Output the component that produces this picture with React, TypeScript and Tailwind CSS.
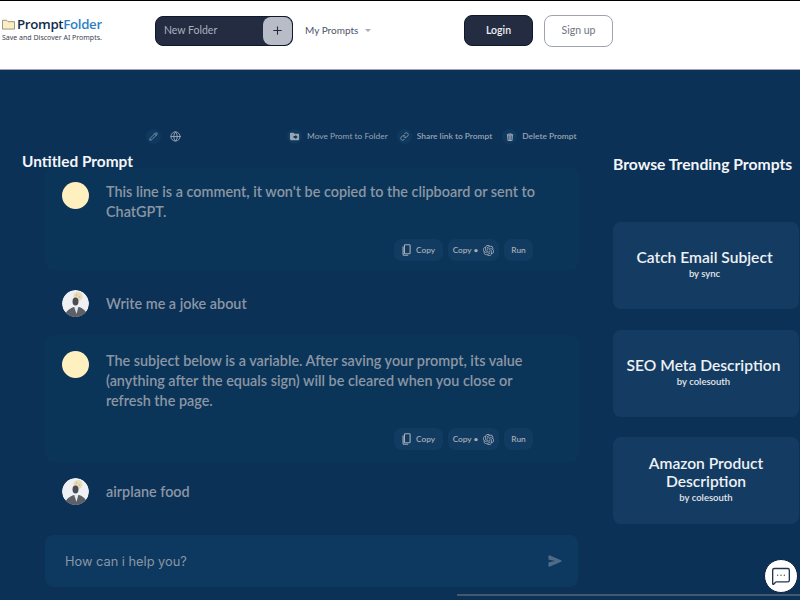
import { Pencil, Globe, Plus, MessageSquareMore } from "lucide-react";
import { MdDriveFileMove } from "react-icons/md";
import { BsTrash3Fill } from "react-icons/bs";
import { IoSend } from "react-icons/io5";
import { SiOpenai } from "react-icons/si";
import { FiLink } from "react-icons/fi";

const font = "font-['Lato','Noto_Sans',sans-serif]";

function Avatar() {
  return (
    <svg viewBox="0 0 27 27" className="w-[27px] h-[27px] shrink-0 rounded-full">
      <circle cx="13.5" cy="13.5" r="13.5" fill="#eef0f4" />
      <circle cx="16" cy="6.5" r="4.5" fill="#e6dcb8" />
      <circle cx="14.5" cy="5" r="0.8" fill="#c9b98a" />
      <circle cx="17.5" cy="7" r="0.8" fill="#c9b98a" />
      <ellipse cx="13.5" cy="11.5" rx="3" ry="4" fill="#4a4d54" />
      <path d="M3 27 C3 21 8 18.5 12 17 L17 17 C21 18.5 25 21 25 27 Z" fill="#5d6067" />
      <path d="M12 16.5 L14.5 24 L16.5 16.5 Z" fill="#e6e8ec" />
    </svg>
  );
}

function Yellow() {
  return <div className="w-[27px] h-[27px] shrink-0 rounded-full bg-[#fff0c0]" />;
}

function CopyIcon() {
  return (
    <svg viewBox="0 0 10 14" className="w-[9px] h-[12px]" fill="none" stroke="currentColor" strokeWidth="1.3">
      <rect x="2.6" y="0.8" width="6.6" height="10.6" rx="1" />
      <path d="M1 3 V12 Q1 13.2 2.2 13.2 H7" />
    </svg>
  );
}

function Tool({ w, children }: { w: string; children: React.ReactNode }) {
  return <span className={`${w} h-[22px] rounded-lg bg-[#123b61] flex items-center justify-center gap-[5px] text-[8.3px] font-semibold text-[#a5adb8]`}>{children}</span>;
}

function Actions() {
  return (
    <div className="flex justify-end gap-[5px] pr-[46px]">
      <Tool w="w-[49px]"><CopyIcon /><span>Copy</span></Tool>
      <Tool w="w-[51px]"><span>Copy •</span><SiOpenai size={11} /></Tool>
      <Tool w="w-[29px]">Run</Tool>
    </div>
  );
}

function Trend({ title, by, shift }: { title: string; by: string; shift?: string }) {
  return (
    <div className={`w-[186px] h-[87px] rounded-lg bg-[#143c62] flex flex-col items-center justify-center text-center ${shift ?? ""}`}>
      <div className="text-[15.6px] leading-[18px] font-semibold text-[#eef1f5]">{title}</div>
      <div className="text-[9.5px] leading-[14px] mt-[1px] font-semibold text-[#e3e7ec]">{by}</div>
    </div>
  );
}

function ToolbarItem({ icon, label, weight }: { icon: React.ReactNode; label: string; weight: string }) {
  return (
    <span className={`flex items-center gap-[5px] text-[8.4px] ${weight} text-[#9aa5b2]`}>
      <span className="w-[15px] h-[15px] rounded-full bg-[#0f3a60] flex items-center justify-center">{icon}</span>
      {label}
    </span>
  );
}

export default function App() {
  return (
    <div className={`${font} w-[800px] h-[600px] overflow-hidden flex flex-col bg-[#0b3156]`}>
      <header className="h-[70px] shrink-0 bg-white border-t border-t-black border-b border-b-[#9fa3b5] flex items-center">
        <div className="w-[155px] shrink-0 pl-[2px] -mt-[13px]">
          <div className="flex items-center gap-[2px] h-[16px]">
            <svg viewBox="0 0 14 12" className="w-[13px] h-[12px]">
              <path d="M0.5 2 H5 L6.5 3.5 H13.5 V11.5 H0.5 Z" fill="#fbeec2" stroke="#77735f" strokeWidth="0.8" />
            </svg>
            <span className="text-[13.3px] leading-[16px] font-semibold font-['Open_Sans'] tracking-tight text-[#0f2a4a]">Prompt<span className="text-[#2f80c8]">Folder</span></span>
          </div>
          <div className="text-[7px] leading-[9px] text-[#3c4350] mt-[1px] font-['Noto_Sans']">Save and Discover AI Prompts.</div>
        </div>
        <div className="w-[138px] h-[30px] shrink-0 rounded-lg bg-[#242c42] border border-[#10182c] flex items-center justify-between -mt-[9px]">
          <span className="pl-2 text-[10.5px] text-[#aab1bd]">New Folder</span>
          <span className="w-[29px] h-[28px] rounded-lg bg-[#b7bcc6] flex items-center justify-center"><Plus size={13} className="text-[#242c42]" /></span>
        </div>
        <div className="ml-[12px] flex items-center gap-[7px] text-[10px] text-[#4d5568] -mt-[9px] w-[159px]">
          My Prompts
          <span className="w-0 h-0 border-l-[3.5px] border-r-[3.5px] border-t-[3.5px] border-l-transparent border-r-transparent border-t-[#a8acb5]" />
        </div>
        <button className="w-[69px] h-[31px] shrink-0 rounded-lg bg-[#242c42] border border-[#10182c] text-[10.5px] font-semibold text-[#eef0f3] -mt-[9px]">Login</button>
        <button className="ml-[11px] w-[69px] h-[32px] shrink-0 rounded-lg bg-white border border-[#9ea3ad] text-[10.5px] text-[#6d7480] -mt-[9px]">Sign up</button>
      </header>

      <main className="flex h-[524px] shrink-0">
        <div className="w-[613px] shrink-0 flex flex-col">
          <div className="h-[35px] mt-[49px] pl-[146px] flex items-center text-[#9aa5b2]">
            <span className="w-[15px] h-[15px] rounded-full bg-[#0f3a60] flex items-center justify-center"><Pencil size={9} /></span>
            <span className="ml-[7px] w-[15px] h-[15px] flex items-center justify-center"><Globe size={11} /></span>
            <div className="ml-[104px] flex">
              <ToolbarItem icon={<MdDriveFileMove size={11} />} label="Move Promt to Folder" weight="font-normal" />
              <span className="ml-[9px]"><ToolbarItem icon={<FiLink size={9} />} label="Share link to Prompt" weight="font-semibold" /></span>
              <span className="ml-[10px]"><ToolbarItem icon={<BsTrash3Fill size={8} />} label="Delete Prompt" weight="font-semibold" /></span>
            </div>
          </div>
          <h1 className="relative z-10 pl-[22px] -mt-[2px] h-[18px] text-[15.4px] leading-[18px] font-bold text-[#f3f5f8]">Untitled Prompt</h1>

          <section className="ml-[45px] w-[534px] h-[102px] -mt-[2px] bg-[#0b3558] rounded-lg pt-[14px] flex flex-col">
            <div className="flex pl-[17px] gap-[17px] h-[57px]">
              <Yellow />
              <p className="w-[445px] text-[14.4px] leading-[20px] font-semibold text-[#8b96a5]">This line is a comment, it won't be copied to the clipboard or sent to ChatGPT.</p>
            </div>
            <Actions />
          </section>

          <div className="ml-[62px] mt-[20px] flex items-center gap-[17px] h-[27px]">
            <Avatar />
            <p className="text-[14.4px] font-semibold text-[#8b96a5]">Write me a joke about</p>
          </div>

          <section className="ml-[45px] w-[534px] h-[127px] mt-[18px] bg-[#0b3558] rounded-lg pt-[16px] flex flex-col">
            <div className="flex pl-[17px] gap-[17px] h-[77px]">
              <Yellow />
              <p className="w-[445px] text-[14.4px] leading-[20px] font-semibold text-[#8b96a5]">The subject below is a variable. After saving your prompt, its value (anything after the equals sign) will be cleared when you close or refresh the page.</p>
            </div>
            <Actions />
          </section>

          <div className="ml-[62px] mt-[16px] flex items-center gap-[17px] h-[27px]">
            <Avatar />
            <p className="text-[14.4px] font-semibold text-[#8b96a5]">airplane food</p>
          </div>

          <div className="ml-[45px] w-[533px] h-[52px] mt-[30px] rounded-lg bg-[#0d3960] flex items-center justify-between pl-[20px] pr-[16px]">
            <span className="text-[12.8px] leading-[20px] pt-[1px] text-[#8b96a5] font-['Inter']">How can i help you?</span>
            <IoSend size={14} className="text-[#4f6b88]" />
          </div>
        </div>

        <aside className="flex-1 flex flex-col pt-[84px]">
          <h2 className="text-[15.7px] leading-[20px] font-bold text-[#f3f5f8] whitespace-nowrap">Browse Trending Prompts</h2>
          <div className="mt-[48px] flex flex-col">
            <Trend title="Catch Email Subject" by="by sync" shift="pr-[3px] pb-[2px]" />
            <Trend title="SEO Meta Description" by="by colesouth" shift="mt-[21px] pr-[5px] pb-[3px]" />
            <Trend title="Amazon Product Description" by="by colesouth" shift="mt-[20px] pb-[3px]" />
          </div>
          <div className="mt-[35px] ml-[151px] w-[34px] h-[34px] rounded-full bg-white border border-[#0b1f3f] flex items-center justify-center shrink-0">
            <MessageSquareMore size={20} strokeWidth={1.6} className="text-[#24344f]" />
          </div>
        </aside>
      </main>
      <div className="ml-[457px] h-[2px] shrink-0 bg-[#44586f]" />
    </div>
  );
}
